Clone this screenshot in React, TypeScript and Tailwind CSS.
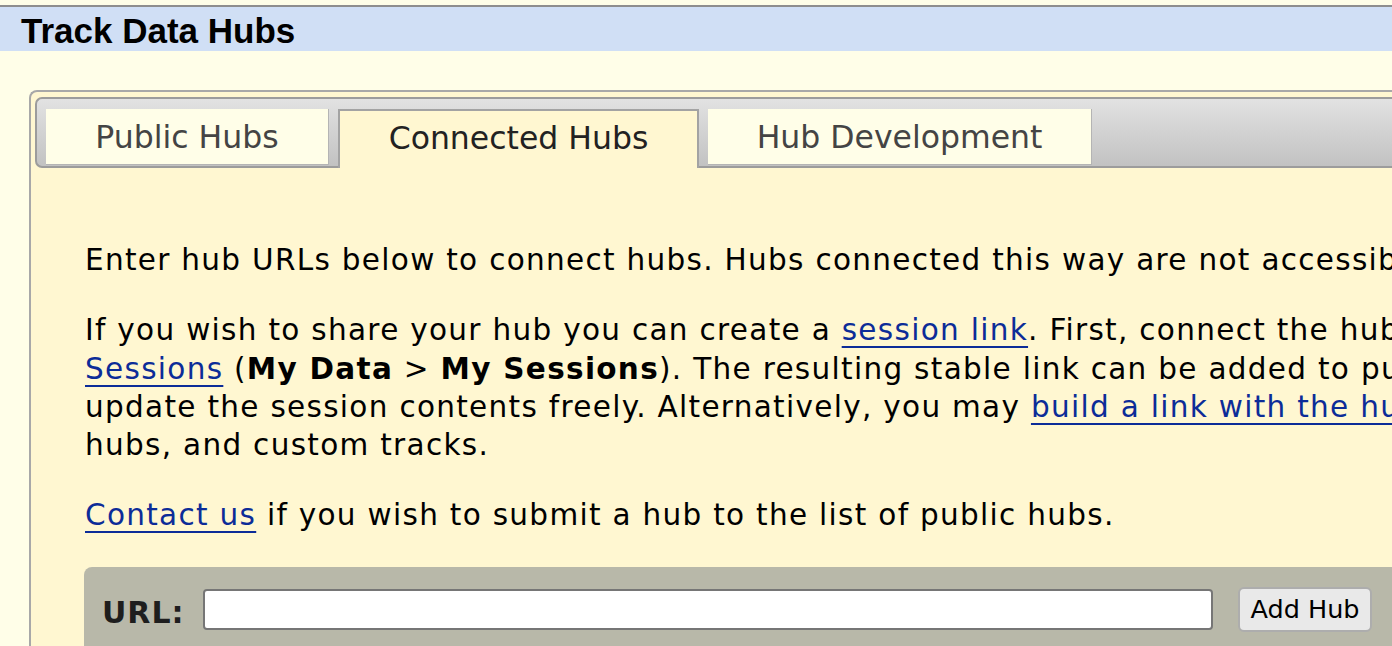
const body = { fontFamily: '"DejaVu Sans", Verdana, sans-serif' };

function Link({ children }: { children: React.ReactNode }) {
  return (
    <a href="#" className="text-[#0c2c98] underline decoration-[2px] underline-offset-[6px]">
      {children}
    </a>
  );
}

export default function App() {
  return (
    <div className="h-[646px] w-[1392px] overflow-hidden bg-[#fffee8]" style={body}>
      {/* page title bar */}
      <div className="h-[5px]" />
      <div className="flex h-[46px] items-center border-t-2 border-[#8e8e8e] bg-[#d0dff5] pl-[21px] pt-[3px]">
        <h1
          className="text-[35px] font-bold leading-none text-black"
          style={{ fontFamily: '"Liberation Sans", Arial, sans-serif' }}
        >
          Track Data Hubs
        </h1>
      </div>

      <div className="pl-[29px] pt-[39px]">
        <div className="w-[1500px] rounded-tl-[8px] border-l-2 border-t-2 border-[#a8a8a8] bg-[#fff7d1] pl-[4px] pt-[5px]">
          {/* tabs */}
          <div className="flex h-[71px] gap-[9px] rounded-l-[7px] border-2 border-r-0 border-[#9c9c9c] bg-gradient-to-b from-[#e2e2e2] to-[#c2c2c2] pl-[9px] pt-[10px]">
            <div className="flex h-[56px] w-[283px] items-center justify-center border-b border-r border-[#b4b4b4] bg-[#fffee8] pt-[3px] text-[31.5px] text-[#444]">
              Public Hubs
            </div>
            <div className="relative z-10 flex h-[59px] w-[361px] items-center justify-center border-x-2 border-t-2 border-[#a3a3a3] bg-[#fff7d1] pb-[2px] text-[31.5px] text-[#222]">
              Connected Hubs
            </div>
            <div className="flex h-[56px] w-[384px] items-center justify-center border-b border-r border-[#b4b4b4] bg-[#fffee8] pt-[3px] text-[31.5px] text-[#444]">
              Hub Development
            </div>
          </div>

          {/* tab content */}
          <div className="whitespace-nowrap pl-[50px] pt-[73px] text-[29.5px] leading-[38.3px] tracking-[1.3px] text-black">
            <p className="mb-[32px]">
              Enter hub URLs below to connect hubs. Hubs connected this way are not accessible to other users by default.
            </p>
            <p className="mb-[32px]">
              If you wish to share your hub you can create a <Link>session link</Link>. First, connect the hub and configure the browser, then save via My
              <br />
              <Link>Sessions</Link> (<b>My Data</b> &gt; <b>My Sessions</b>). The resulting stable link can be added to publications, emails, or
              <br />
              update the session contents freely. Alternatively, you may <Link>build a link with the hub URL</Link> to load tracks, track
              <br />
              hubs, and custom tracks.
            </p>
            <p className="mb-[32px]">
              <Link>Contact us</Link> if you wish to submit a hub to the list of public hubs.
            </p>

            <div className="-ml-px flex h-[120px] items-start rounded-tl-[8px] bg-[#b8b8a9] pl-[18px] pt-[20px] tracking-normal">
              <span className="mt-[7px] w-[101px] text-[30px] font-bold tracking-[1px] text-[#1e1e1e]">URL:</span>
              <input
                type="text"
                className="mt-[2px] h-[41px] w-[1010px] rounded-[4px] border-2 border-[#767676] bg-white"
              />
              <button className="ml-[25px] h-[45px] w-[134px] rounded-[6px] border-2 border-[#adadad] bg-[#e9e9e9] text-[25.5px] text-black">
                Add Hub
              </button>
            </div>
          </div>
        </div>
      </div>
    </div>
  );
}
